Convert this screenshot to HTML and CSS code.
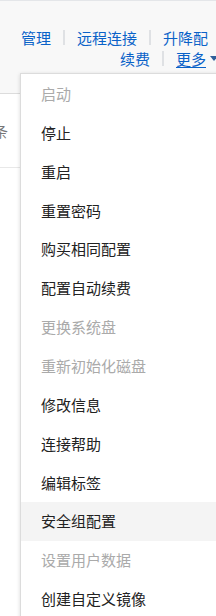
FILE: index.html
```html
<!DOCTYPE html>
<html lang="zh-CN">
<head>
    <meta charset="UTF-8">
    <meta name="viewport" content="width=device-width, initial-scale=1.0">
    <title>实例操作</title>
    <link rel="stylesheet" href="styles.css">
</head>
<body>
    <div class="table-wrap">
        <!-- 操作行 -->
        <div class="row row-head">
            <div class="ops">
                <div class="ops-line line-1">
                    <a class="op-link" href="#">管理</a>
                    <span class="sep"></span>
                    <a class="op-link" href="#">远程连接</a>
                    <span class="sep"></span>
                    <a class="op-link" href="#">升降配</a>
                </div>
                <div class="ops-line line-2">
                    <a class="op-link" href="#">续费</a>
                    <span class="sep"></span>
                    <a class="op-link more" href="#">更多</a>
                    <span class="caret"></span>
                </div>
            </div>
        </div>
        <div class="row row-body">
            <span class="cell-text">条</span>
        </div>
        <div class="row row-empty"></div>

        <!-- 下拉菜单 -->
        <ul class="dropdown">
            <li class="item disabled">启动</li>
            <li class="item">停止</li>
            <li class="item">重启</li>
            <li class="item">重置密码</li>
            <li class="item">购买相同配置</li>
            <li class="item">配置自动续费</li>
            <li class="item disabled">更换系统盘</li>
            <li class="item disabled">重新初始化磁盘</li>
            <li class="item">修改信息</li>
            <li class="item">连接帮助</li>
            <li class="item">编辑标签</li>
            <li class="item active">安全组配置</li>
            <li class="item disabled">设置用户数据</li>
            <li class="item">创建自定义镜像</li>
        </ul>
    </div>
</body>
</html>
```

FILE: styles.css
```css
html, body {
    margin: 0;
    padding: 0;
}

body {
    font-family: "Noto Sans CJK SC", "Noto Sans", sans-serif;
    font-size: 15px;
    color: #333;
    background-color: #fff;
    width: 216px;
    height: 616px;
    overflow: hidden;
}

.table-wrap {
    position: relative;
    width: 216px;
}

.row {
    box-sizing: border-box;
}

.row-head {
    height: 94px;
    background-color: #f8f8f8;
    border-top: 1px solid #e4e6e9;
    border-bottom: 1px solid #dcdcdc;
}

.ops {
    padding-top: 26px;
}

.ops-line {
    display: flex;
    justify-content: flex-end;
    align-items: center;
    height: 21px;
    line-height: 21px;
}

.line-1 {
    margin-right: 8px;
}

.line-2 {
    margin-right: -2px;
}

.op-link {
    color: #0a62c8;
    text-decoration: none;
}

.more {
    text-decoration: underline;
    text-underline-offset: 2px;
}

.sep {
    display: inline-block;
    width: 0;
    height: 15px;
    border-left: 2px solid #dfe1e4;
    margin: 0 12px;
}

.caret {
    display: inline-block;
    width: 0;
    height: 0;
    margin-left: 4px;
    border-left: 4px solid transparent;
    border-right: 4px solid transparent;
    border-top: 5px solid #2f5f9a;
}

.row-body {
    height: 74px;
    border-bottom: 1px solid #e8e8e8;
    display: flex;
    align-items: center;
}

.cell-text {
    color: #777;
    margin-left: -7px;
}

.row-empty {
    height: 448px;
}

/* 下拉菜单 */
.dropdown {
    position: absolute;
    top: 73px;
    left: 20px;
    width: 220px;
    margin: 0;
    padding: 1px 0 4px;
    list-style: none;
    background-color: #fff;
    border: 1px solid #dcdcdc;
    box-shadow: 0 1px 4px rgba(0, 0, 0, 0.15);
}

.item {
    height: 38.87px;
    line-height: 38.87px;
    padding-left: 20px;
    color: #222;
    white-space: nowrap;
}

.item.disabled {
    color: #aaa;
}

.item.active {
    background-color: #f4f4f4;
}
```
